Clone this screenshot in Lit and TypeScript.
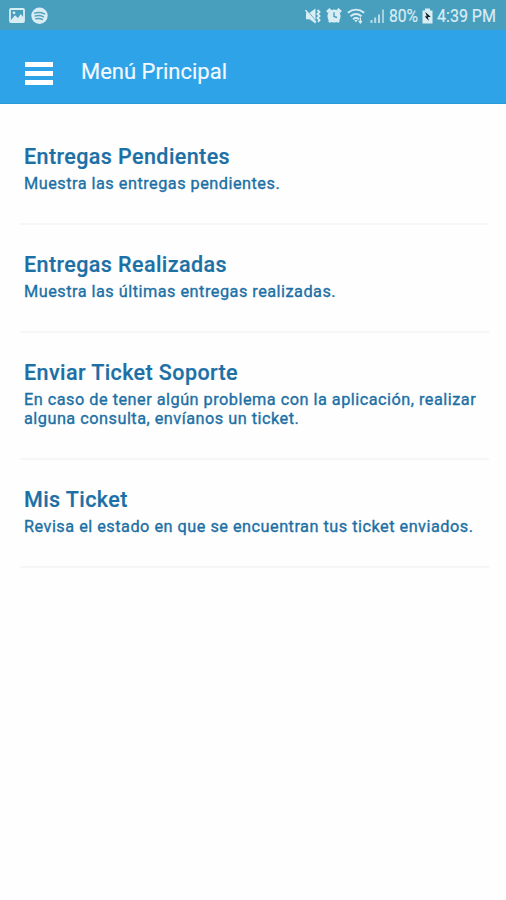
import { LitElement, html, css } from "lit";
import { customElement } from "lit/decorators.js";

const ENTRIES = [
  { title: "Entregas Pendientes", lines: ["Muestra las entregas pendientes."] },
  { title: "Entregas Realizadas", lines: ["Muestra las últimas entregas realizadas."] },
  {
    title: "Enviar Ticket Soporte",
    lines: ["En caso de tener algún problema con la aplicación, realizar", "alguna consulta, envíanos un ticket."],
  },
  { title: "Mis Ticket", lines: ["Revisa el estado en que se encuentran tus ticket enviados."] },
];

@customElement("status-bar")
class StatusBar extends LitElement {
  static styles = css`
    :host { display: flex; align-items: center; box-sizing: border-box; height: 30px; padding: 1px 9px 0 8px; background: #489ebd; color: #d9edf5; font-size: 18px; }
    svg { display: block; flex: none; }
    .gap { flex: 1; }
    .disc { margin-left: 5px; }
    .percent { width: 30px; margin-left: 4px; }
    .time { width: 60px; margin-left: 4px; }
    .narrow { display: block; width: max-content; white-space: nowrap; line-height: 28px; transform-origin: 0 50%; -webkit-text-stroke: 0.2px #d9edf5; }
    .percent .narrow { transform: scaleX(0.87); }
    .time .narrow { transform: scaleX(0.89); }
    .alarm { margin-left: 4px; }
    .wifi { margin-left: 5px; }
    .signal { margin-left: 4px; }
    .battery { margin-left: 3px; }
  `;

  render() {
    return html`
      <svg width="18" height="18" viewBox="0 0 18 18">
        <rect x="2" y="2" width="14" height="13" rx="1" fill="none" stroke="#d9edf5" stroke-width="1.8" />
        <path d="M3 13 7 8.2l3 2.8 2.7-4L16 11v4H3z" fill="#d9edf5" />
        <circle cx="6" cy="5.8" r="1.4" fill="#d9edf5" />
      </svg>
      <svg class="disc" width="17" height="18" viewBox="0 0 17 18">
        <circle cx="8.5" cy="8.8" r="8.2" fill="#d9edf5" />
        <path d="M3.6 6.1q5.2-1.5 10 .8M4.2 9q4.5-1.1 8.3.8M4.9 11.7q3.6-.8 6.5.8" fill="none" stroke="#55a2bd" stroke-width="1.5" stroke-linecap="round" />
      </svg>
      <span class="gap"></span>
      <svg width="17" height="18" viewBox="0 0 17 18">
        <path d="M1 5.800h3.600L10.500 1.500v15L4.600 12.200H1z" fill="#d9edf5" />
        <path d="M1.500 2.500 11.500 14.500" stroke="#489ebd" stroke-width=".8" />
        <path d="M.5 3.200 10.800 15.600" stroke="#d9edf5" stroke-width="1.500" />
        <path d="M12.500 3l2 2-2 2 2 2-2 2 2 2-1.500 2" fill="none" stroke="#d9edf5" stroke-width="1.900" />
      </svg>
      <svg class="alarm" width="16" height="18" viewBox="0 0 16 18">
        <path d="M1 5 4.500 2M15 5l-3.500-3M3 15l2-2M13 15l-2-2" stroke="#d9edf5" stroke-width="2.800" />
        <circle cx="8" cy="9" r="5.600" fill="#d9edf5" stroke="#d9edf5" stroke-width="2" />
        <path d="M8 5.300V9.400L11 10.500" fill="none" stroke="#489ebd" stroke-width="1.400" />
      </svg>
      <svg class="wifi" width="19" height="18" viewBox="0 0 19 18">
        <path d="M.8 5.800q8.200-6.200 16.400 0M3.500 9.200q5.500-4.400 11 0M6 12.200q3-2.400 6 0" fill="none" stroke="#d9edf5" stroke-width="1.800" />
        <path d="M7.200 13h3.600L9 15.300z" fill="#d9edf5" />
        <path d="M13.400 10.500v5M11.900 14l1.500 2 1.500-2" fill="none" stroke="#d9edf5" stroke-width="1.300" />
      </svg>
      <svg class="signal" width="15" height="18" viewBox="0 0 15 18">
        <path d="M1.500 16v-3M5.200 16v-5.500M9 16V7.500" stroke="#b9dce9" stroke-width="2" />
        <path d="M13 16V2.500" stroke="#a3cfdf" stroke-width="2" />
      </svg>
      <span class="percent"><span class="narrow">80%</span></span>
      <svg class="battery" width="11" height="18" viewBox="0 0 11 18">
        <path d="M3 1.500h5v2h2.500v13H.5v-13H3z" fill="#d9edf5" />
        <path d="M3.200 5 8.700 9.700 5.700 10.300 7 14 2.800 9.500l2-.3z" fill="#101c22" />
      </svg>
      <span class="time"><span class="narrow">4:39 PM</span></span>
    `;
  }
}

@customElement("menu-entry")
class MenuEntry extends LitElement {
  static properties = { heading: {}, lines: { attribute: false } };
  declare heading: string;
  declare lines: string[];

  static styles = css`
    :host { display: block; box-sizing: border-box; padding: 28px 0 30px 4px; border-bottom: 2px solid #f6f6f6; color: #1c70a5; }
    .heading { margin: 0 0 5px; font-size: 21.5px; line-height: 24px; font-weight: 500; letter-spacing: 0.41px; -webkit-text-stroke: 0.2px #1c70a5; }
    .line { display: block; font-size: 16.3px; line-height: 19px; letter-spacing: 0.49px; white-space: nowrap; -webkit-text-stroke: 0.35px #1c70a5; }
  `;

  render() {
    return html`
      <h2 class="heading">${this.heading}</h2>
      ${this.lines.map((line) => html`<span class="line">${line}</span>`)}
    `;
  }
}

@customElement("app-root")
class AppRoot extends LitElement {
  static styles = css`
    :host { display: block; min-height: 900px; background: #fefefe; font-family: Roboto, sans-serif; }
    .toolbar { display: flex; align-items: center; box-sizing: border-box; height: 74px; padding: 10px 25px 0; background: #2fa3e8; color: #f4faff; border-bottom: 1px solid #2b9ad9; }
    .menu { display: grid; gap: 4px; width: 28px; padding-top: 3px; }
    .bar { height: 5px; background: #fff; }
    .title { margin: 0 0 0 28px; font-size: 22px; line-height: 28px; font-weight: 400; -webkit-text-stroke: 0.15px #f4faff; }
    .list { display: block; padding: 13px 17px 0 20px; }
  `;

  render() {
    return html`
      <status-bar></status-bar>
      <header class="toolbar">
        <div class="menu"><span class="bar"></span><span class="bar"></span><span class="bar"></span></div>
        <h1 class="title">Menú Principal</h1>
      </header>
      <main class="list">
        ${ENTRIES.map((e) => html`<menu-entry .heading=${e.title} .lines=${e.lines}></menu-entry>`)}
      </main>
    `;
  }
}
